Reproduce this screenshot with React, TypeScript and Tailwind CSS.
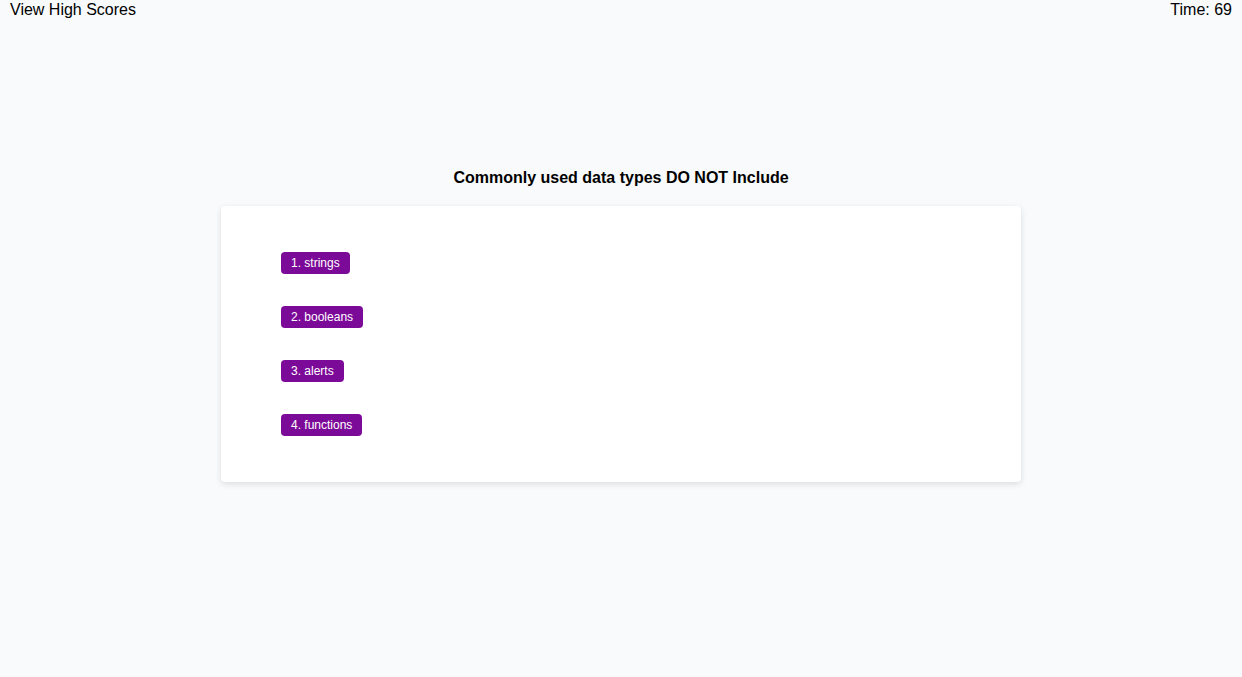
const answers = ['1. strings', '2. booleans', '3. alerts', '4. functions'];

export default function App() {
  return (
    <div className="min-h-[677px] bg-[#f9fafb] text-black font-['Liberation_Sans',Arial,sans-serif]">
      <header className="flex justify-between px-[10px] pt-[1px] text-base leading-[18px]">
        <span>View High Scores</span>
        <span>Time: 69</span>
      </header>

      <main className="flex flex-col items-center pt-[150px]">
        <h2 className="text-base font-bold leading-[18px] mb-[19px]">
          Commonly used data types DO NOT Include
        </h2>
        <div className="w-[800px] h-[276px] bg-white rounded-[4px] shadow-[0_2px_6px_rgba(0,0,0,0.12)] px-[60px] pt-[46px]">
          <ul className="flex flex-col gap-[32px]">
            {answers.map((a) => (
              <li key={a} className="flex">
                <button className="bg-[#7c0a98] text-white text-xs leading-[14px] px-[10px] py-[4px] rounded-[4px]">
                  {a}
                </button>
              </li>
            ))}
          </ul>
        </div>
      </main>
    </div>
  );
}
